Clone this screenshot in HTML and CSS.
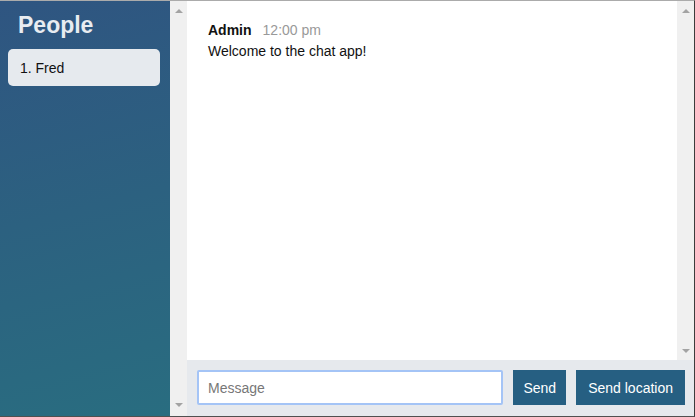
FILE: index.html
```html
<!DOCTYPE html>
<html>
<head>
<meta charset="utf-8">
<link rel="stylesheet" href="styles.css">
</head>
<body>
<div class="frame">
  <aside class="sidebar">
    <h3 class="sidebar-title">People</h3>
    <ol class="people">
      <li class="person">1. Fred</li>
    </ol>
  </aside>
  <div class="scrollbar">
    <span class="arrow arrow-up"></span>
    <span class="arrow arrow-down"></span>
  </div>
  <main class="chat">
    <div class="chat-body">
      <ol class="messages">
        <li class="message">
          <div class="message-title">
            <span class="author">Admin</span>
            <span class="time">12:00 pm</span>
          </div>
          <p class="message-text">Welcome to the chat app!</p>
        </li>
      </ol>
      <div class="scrollbar">
        <span class="arrow arrow-up"></span>
        <span class="arrow arrow-down"></span>
      </div>
    </div>
    <form class="chat-footer">
      <input class="message-input" type="text" placeholder="Message">
      <button class="btn" type="button">Send</button>
      <button class="btn btn-location" type="button">Send location</button>
    </form>
  </main>
</div>
</body>
</html>
```

FILE: styles.css
```css
* { box-sizing: border-box; }
html, body { margin: 0; padding: 0; }
body {
  width: 695px;
  height: 417px;
  font-family: "Liberation Sans", Arial, sans-serif;
  font-size: 14px;
  color: #111;
  overflow: hidden;
}
.frame {
  width: 695px;
  height: 417px;
  display: flex;
  border-top: 1px solid #ababab;
  border-right: 1px solid #3c3c3c;
  border-bottom: 1px solid #505050;
}
.sidebar {
  width: 170px;
  flex: none;
  background: linear-gradient(165deg, #2f5581 0%, #2c6180 50%, #296d80 100%);
  padding: 0 10px 0 8px;
}
.sidebar-title {
  margin: 11px 0 10px;
  padding-left: 10px;
  font-size: 23px;
  font-weight: bold;
  color: #e8ecf1;
  line-height: 27px;
}
.people {
  list-style: none;
  margin: 0;
  padding: 0;
}
.person {
  background: #e6eaee;
  border-radius: 5px;
  padding: 11px 12px 10px;
  line-height: 16px;
  color: #111;
}
.scrollbar {
  width: 17px;
  flex: none;
  background: #f0f0f0;
  display: flex;
  flex-direction: column;
  justify-content: space-between;
  align-items: center;
  padding: 8px 0 9px;
}
.arrow {
  width: 0;
  height: 0;
  border-left: 4px solid transparent;
  border-right: 4px solid transparent;
}
.arrow-up { border-bottom: 4px solid #a3a3a3; }
.arrow-down { border-top: 4px solid #a3a3a3; }
.chat {
  flex: 1;
  display: flex;
  flex-direction: column;
  min-width: 0;
}
.chat-body {
  flex: 1;
  display: flex;
  background: #fff;
}
.chat-body .scrollbar {
  padding: 8px 0 7px;
}
.messages {
  flex: 1;
  list-style: none;
  margin: 0;
  padding: 21px 21px 0;
}
.message-title {
  display: flex;
  gap: 11px;
  line-height: 16px;
  margin-bottom: 5px;
}
.author { font-weight: bold; color: #111; }
.time { color: #999; }
.message-text {
  margin: 0;
  line-height: 16px;
  color: #111;
}
.chat-footer {
  height: 56px;
  flex: none;
  margin: 0;
  background: #e6e9ed;
  display: flex;
  gap: 10px;
  padding: 10px 9px 10px 10px;
}
.message-input {
  flex: 1;
  min-width: 0;
  height: 35px;
  border: 2px solid #a4c4f6;
  border-radius: 2px;
  padding: 0 9px;
  font-family: "Liberation Sans", Arial, sans-serif;
  font-size: 14px;
  outline: none;
  background: #fff;
}
.message-input::placeholder { color: #777; }
.btn {
  height: 35px;
  border: none;
  background: #265f82;
  color: #fff;
  font-family: "Liberation Sans", Arial, sans-serif;
  font-size: 14px;
  padding: 0 10px;
  cursor: pointer;
}
.btn-location { padding: 0 12px; }
```
